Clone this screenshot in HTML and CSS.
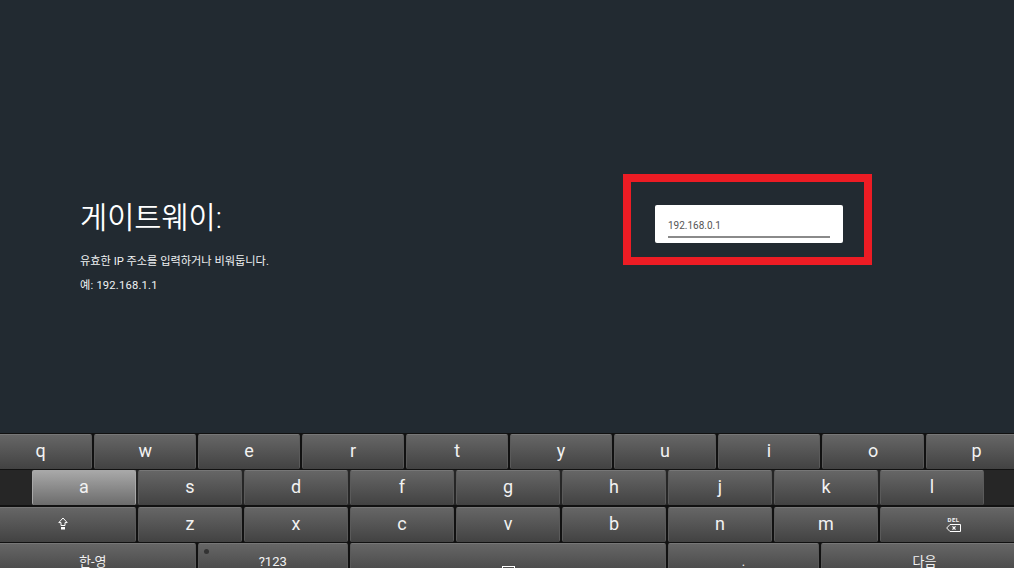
FILE: index.html
```html
<!DOCTYPE html>
<html lang="ko">
<head>
    <meta charset="UTF-8">
    <meta name="viewport" content="width=device-width, initial-scale=1.0">
    <title>게이트웨이</title>
    <link rel="stylesheet" href="styles.css">
</head>
<body>
    <div class="screen">
        <main class="setup">
            <section class="info">
                <h1>게이트웨이:</h1>
                <p>유효한 IP 주소를 입력하거나 비워둡니다.</p>
                <p class="sample">예: 192.168.1.1</p>
            </section>
            <section class="entry">
                <div class="field"><span class="field-text">192.168.0.1</span></div>
                <div class="highlight"></div>
            </section>
        </main>

        <div class="keyboard">
            <div class="row row1">
                <div class="key edge-left">q</div>
                <div class="key">w</div>
                <div class="key">e</div>
                <div class="key">r</div>
                <div class="key">t</div>
                <div class="key">y</div>
                <div class="key">u</div>
                <div class="key">i</div>
                <div class="key">o</div>
                <div class="key edge-right">p</div>
            </div>
            <div class="row row2">
                <div class="key active">a</div>
                <div class="key">s</div>
                <div class="key">d</div>
                <div class="key">f</div>
                <div class="key">g</div>
                <div class="key">h</div>
                <div class="key">j</div>
                <div class="key">k</div>
                <div class="key">l</div>
            </div>
            <div class="row row3">
                <div class="key edge-left">
                    <svg class="shift-icon" width="10" height="13" viewBox="0 0 10 13">
                        <path d="M5 1 L9.2 5.6 H7 V8.5 H3 V5.6 H0.8 Z" fill="none" stroke="#fff" stroke-width="1"/>
                        <path d="M3 10 H7 V12.5 H3 Z" fill="#fff"/>
                    </svg>
                </div>
                <div class="key">z</div>
                <div class="key">x</div>
                <div class="key">c</div>
                <div class="key">v</div>
                <div class="key">b</div>
                <div class="key">n</div>
                <div class="key">m</div>
                <div class="key del-key edge-right">
                    <span class="del-label">DEL</span>
                    <svg width="15" height="8" viewBox="0 0 15 8">
                        <path d="M4 0.5 H14.5 V7.5 H4 L0.7 4 Z" fill="none" stroke="#fff" stroke-width="1"/>
                        <path d="M6.5 2.3 L9.5 5.7 M9.5 2.3 L6.5 5.7" stroke="#fff" stroke-width="1.2"/>
                    </svg>
                </div>
            </div>
            <div class="row row4">
                <div class="key small edge-left">한-영</div>
                <div class="key small">?123<span class="dot"></span></div>
                <div class="key small space-key"><span class="space-mark"></span></div>
                <div class="key small">.</div>
                <div class="key small edge-right">다음</div>
            </div>
        </div>
    </div>
</body>
</html>
```

FILE: styles.css
```css
html, body {
    margin: 0;
    height: 568px;
    overflow: hidden;
}
body {
    font-family: Roboto, "Noto Sans CJK KR", sans-serif;
    background-color: #222a31;
    color: #fff;
}
.screen {
    display: flex;
    flex-direction: column;
    height: 568px;
    overflow: hidden;
}
.setup {
    height: 433px;
    flex-shrink: 0;
    display: flex;
}
.info {
    width: 655px;
    box-sizing: border-box;
    padding: 200px 0 0 80px;
}
.info h1 {
    margin: 0 0 18px;
    font-size: 29.5px;
    line-height: 36px;
    font-weight: 350;
}
.info p {
    margin: 0 0 8px;
    font-size: 11.2px;
    line-height: 16px;
    color: #f0f2f3;
}
.info .sample {
    letter-spacing: 0.2px;
}
.entry {
    position: relative;
    padding-top: 205px;
}
.field {
    width: 188px;
    height: 38px;
    box-sizing: border-box;
    padding: 14px 13px 0;
    background-color: #fff;
    border-radius: 2px;
}
.field-text {
    display: block;
    height: 17px;
    font-size: 10px;
    line-height: 14px;
    color: #555;
    border-bottom: 2px solid #8a8a8a;
}
.highlight {
    position: absolute;
    left: -32px;
    top: 174px;
    width: 249px;
    height: 91px;
    box-sizing: border-box;
    border: 8px solid #ed1c24;
}
.keyboard {
    flex: 1;
    background-color: #111;
    padding-top: 0.5px;
    display: flex;
    flex-direction: column;
    gap: 1.67px;
}
.row {
    display: grid;
    height: 35px;
    flex-shrink: 0;
}
.row1 {
    grid-template-columns: 92px repeat(8, 101.7px) 1fr;
    column-gap: 2.3px;
}
.row2 {
    grid-template-columns: repeat(9, 104px);
    column-gap: 2px;
    padding: 0 30px 0 32px;
    background-color: #262626;
}
.row3 {
    grid-template-columns: 136px repeat(7, 104px) 1fr;
    column-gap: 2px;
}
.row4 {
    grid-template-columns: 195.5px 150.5px 316px 151px 1fr;
    column-gap: 2px;
}
.key {
    position: relative;
    display: flex;
    align-items: center;
    justify-content: center;
    box-sizing: border-box;
    height: 35px;
    padding-bottom: 3px;
    font-size: 18px;
    color: #f2f2f2;
    border-radius: 2px;
    border-top: 1px solid #777;
    border-left: 1px solid #5a5a5a;
    border-right: 1px solid #5a5a5a;
    background: linear-gradient(#666, #424242);
}
.key.active {
    border-color: #a8a8a8;
    background: linear-gradient(#a8a8a8, #6c6c6c);
}
/* the outer keys run past the screen edge, so their labels sit off centre */
.edge-left {
    padding-right: 10px;
    border-left: 0;
    border-radius: 0 2px 2px 0;
}
.edge-right {
    padding-left: 12px;
    border-right: 0;
    border-radius: 2px 0 0 2px;
}
.key.small {
    font-size: 13px;
    line-height: 16px;
    padding-top: 1px;
    padding-bottom: 0;
    overflow: hidden;
}
.row4 .edge-left {
    padding-right: 9px;
}
.row4 .edge-right {
    padding-left: 13px;
}
.del-key {
    flex-direction: column;
    gap: 1px;
    padding-bottom: 1px;
}
.del-label {
    font-size: 6px;
    line-height: 7px;
    font-weight: 700;
    letter-spacing: 0.5px;
}
.dot {
    position: absolute;
    left: 5px;
    top: 5px;
    width: 5px;
    height: 5px;
    border-radius: 50%;
    background-color: #333;
}
.space-key {
    align-items: flex-end;
}
.space-mark {
    display: block;
    width: 11px;
    height: 3px;
    margin-bottom: 8px;
    border: 1px solid #fff;
    border-bottom: 0;
}
```
